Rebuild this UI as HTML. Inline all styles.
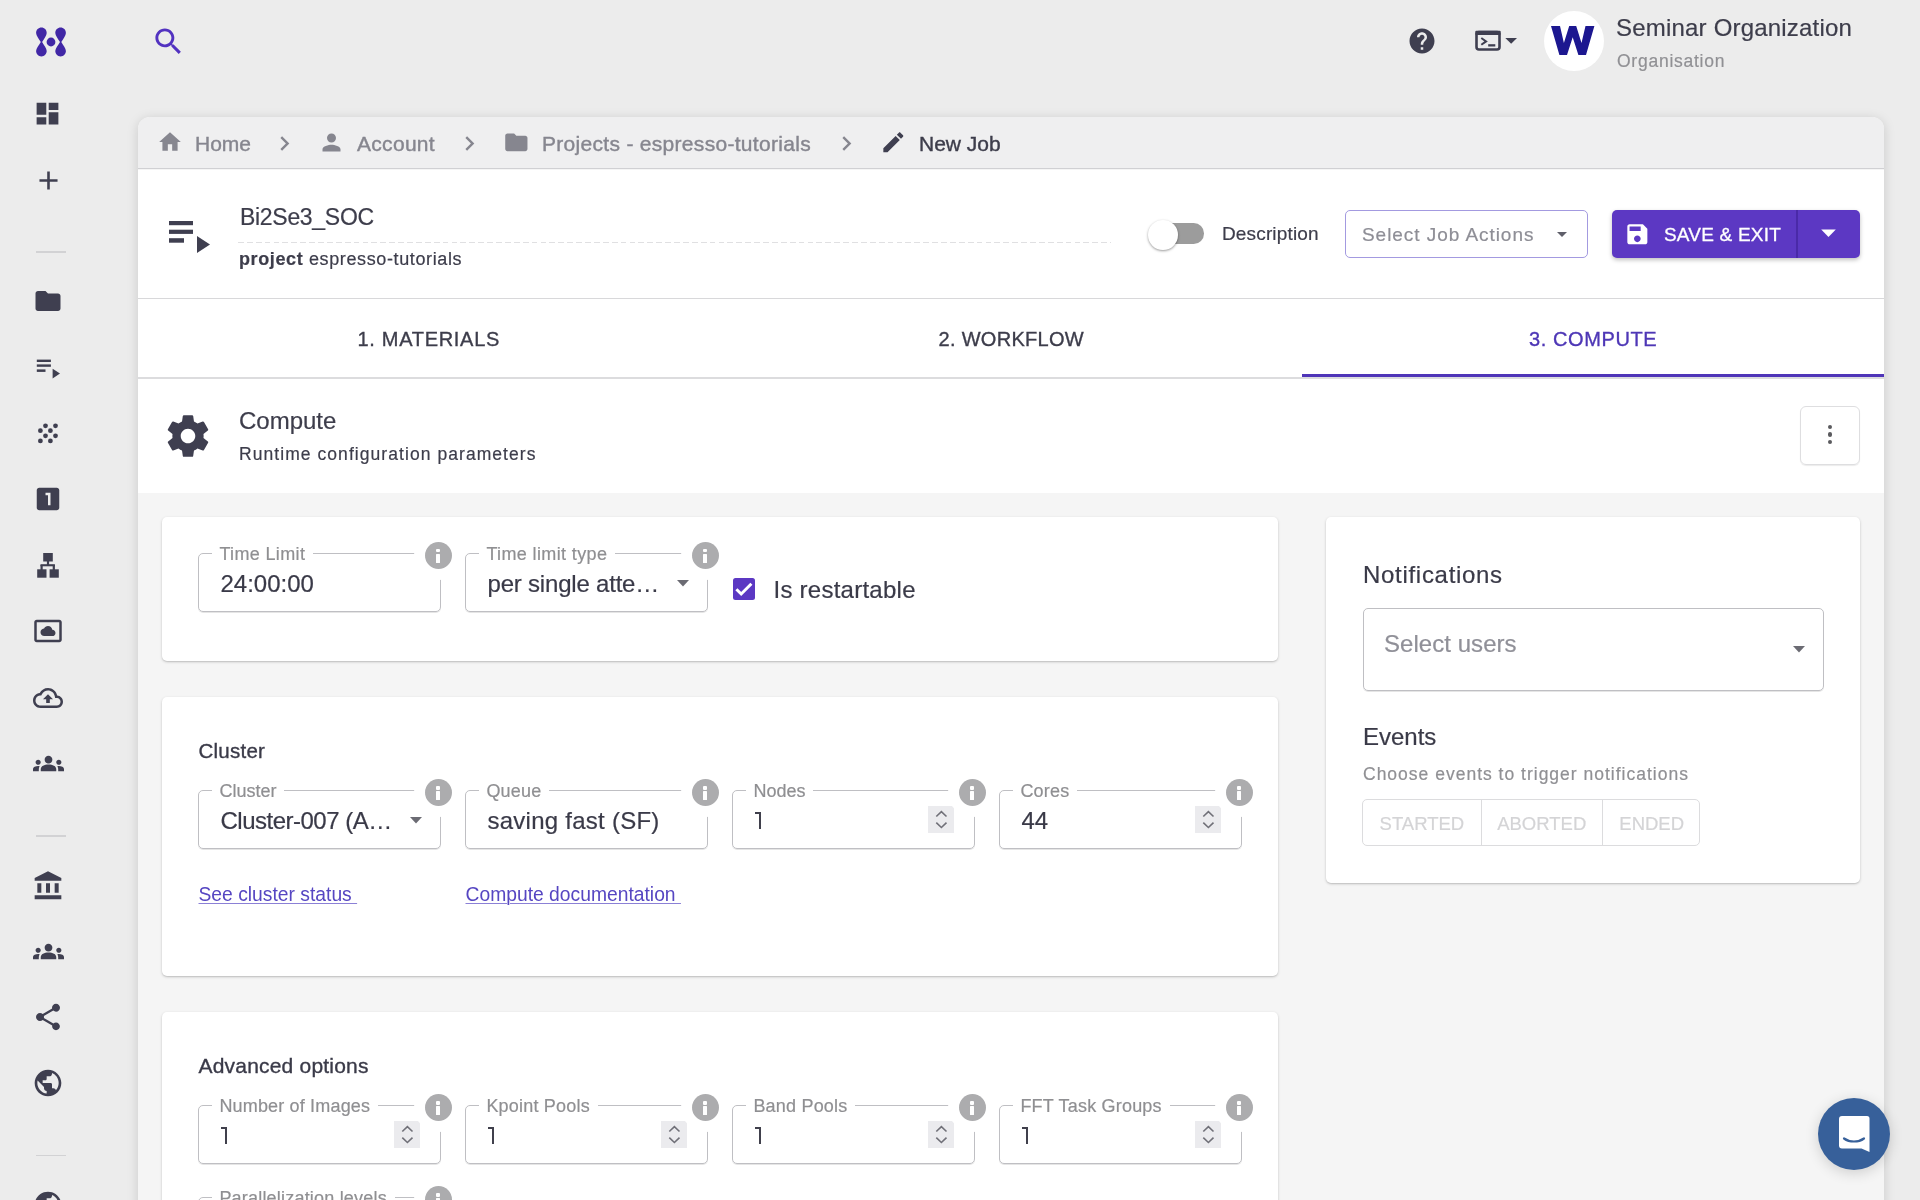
<!DOCTYPE html>
<html><head><meta charset="utf-8">
<style>
*{box-sizing:border-box;}
html,body{margin:0;padding:0;}
body{width:1920px;height:1200px;overflow:hidden;position:relative;will-change:transform;background:#ececec;font-family:"Liberation Sans",sans-serif;color:#3d3d4b;}
.a{position:absolute;}
.t{position:absolute;white-space:nowrap;line-height:1;-webkit-text-stroke-width:0.2px;}
svg.i{position:absolute;fill:#3f3f50;}
.card{position:absolute;background:#fff;border-radius:5px;box-shadow:0 1px 3px rgba(0,0,0,0.18),0 1px 1px rgba(0,0,0,0.08);}
.fld{position:absolute;border:1px solid #bdbdbd;border-radius:5px;height:58px;width:242px;}
.lbl{position:absolute;white-space:nowrap;line-height:1;color:#8e8e96;font-size:18px;letter-spacing:0.3px;background:#fff;padding:0 5px;}
.val{position:absolute;white-space:nowrap;line-height:1;color:#3a3a48;font-size:24px;}
.info{position:absolute;width:48px;height:48px;border-radius:50%;background:#fff;}
.info::after{content:"";position:absolute;left:10.5px;top:10.5px;width:27px;height:27px;border-radius:50%;background:#a9a9a9;}
.info i{position:absolute;left:22.5px;z-index:2;background:#fff;width:3px;}
.spin{position:absolute;width:27px;height:27px;background:#ebebee;}
</style></head>
<body>

<!-- ===== SIDEBAR ===== -->
<!-- logo -->
<svg class="a" style="left:34px;top:26px" width="34" height="32" viewBox="0 0 34 32">
  <g fill="#4127a6">
    <path d="M7.4 1.6c3 0 5.3 2.4 5.3 5.3 0 2.6-2.7 5.8-4.6 9.1h-1.3C4.9 12.7 2.1 9.5 2.1 6.9c0-2.9 2.4-5.3 5.3-5.3z"/>
    <path d="M26.6 1.6c3 0 5.3 2.4 5.3 5.3 0 2.6-2.7 5.8-4.6 9.1h-1.3c-1.9-3.3-4.7-6.5-4.7-9.1 0-2.9 2.4-5.3 5.3-5.3z"/>
    <path d="M7.4 30.4c3 0 5.3-2.4 5.3-5.3 0-2.6-2.7-5.8-4.6-9.1h-1.3C4.9 19.3 2.1 22.5 2.1 25.1c0 2.9 2.4 5.3 5.3 5.3z"/>
    <path d="M26.6 30.4c3 0 5.3-2.4 5.3-5.3 0-2.6-2.7-5.8-4.6-9.1h-1.3c-1.9 3.3-4.7 6.5-4.7 9.1 0 2.9 2.4 5.3 5.3 5.3z"/>
    <circle cx="17" cy="16" r="4.4"/>
  </g>
</svg>
<!-- dashboard -->
<svg class="i" style="left:33px;top:99px" width="29" height="29" viewBox="0 0 24 24"><path d="M3 13h8V3H3v10zm0 8h8v-6H3v6zm10 0h8V11h-8v10zm0-18v6h8V3h-8z"/></svg>
<!-- add -->
<svg class="i" style="left:32.6px;top:164.6px" width="31" height="31" viewBox="0 0 24 24"><path d="M19 13h-6v6h-2v-6H5v-2h6V5h2v6h6v2z"/></svg>
<div class="a" style="left:36px;top:251.2px;width:29.7px;height:1.6px;background:#d2d2d4"></div>
<!-- folder -->
<svg class="i" style="left:33px;top:286px" width="30" height="30" viewBox="0 0 24 24"><path d="M10 4H4c-1.1 0-1.99.9-1.99 2L2 18c0 1.1.9 2 2 2h16c1.1 0 2-.9 2-2V8c0-1.1-.9-2-2-2h-8l-2-2z"/></svg>
<!-- playlist play -->
<svg class="i" style="left:32px;top:352px" width="32" height="32" viewBox="0 0 32 32">
  <rect x="4.8" y="7.6" width="14.1" height="2.4"/><rect x="4.8" y="12.4" width="14.1" height="2.4"/><rect x="4.8" y="17.4" width="8.7" height="2.5"/><path d="M20.6 16.7v9.8l7.4-4.9z"/>
</svg>
<!-- scatter dots -->
<svg class="i" style="left:32px;top:417px" width="32" height="32" viewBox="0 0 32 32">
  <circle cx="13.5" cy="8.8" r="2.4"/><circle cx="23.5" cy="8.8" r="2.4"/>
  <circle cx="8.4" cy="13.7" r="2.4"/><circle cx="18.4" cy="13.7" r="2.4"/>
  <circle cx="13.5" cy="18.8" r="2.4"/><circle cx="23.5" cy="18.8" r="2.4"/>
  <circle cx="8.4" cy="23.9" r="2.4"/><circle cx="18.4" cy="23.9" r="2.4"/>
</svg>
<!-- looks one -->
<svg class="i" style="left:33px;top:484px" width="30" height="30" viewBox="0 0 24 24"><path d="M19 3H5c-1.1 0-2 .9-2 2v14c0 1.1.9 2 2 2h14c1.1 0 2-.9 2-2V5c0-1.1-.9-2-2-2zm-5 14h-2V9h-2V7h4v10z"/></svg>
<!-- sitemap -->
<svg class="i" style="left:32px;top:549px" width="32" height="32" viewBox="0 0 32 32">
  <rect x="11.2" y="4" width="9.6" height="8.5"/><rect x="14.9" y="12" width="2.2" height="4"/>
  <rect x="8.5" y="15.2" width="14.4" height="2.1"/><rect x="8.5" y="16" width="2.2" height="5"/><rect x="20.7" y="16" width="2.2" height="5"/>
  <rect x="5.2" y="20.3" width="9.3" height="8.4"/><rect x="17.6" y="20.3" width="9.2" height="8.4"/>
</svg>
<!-- daydream -->
<svg class="i" style="left:33px;top:616.3px" width="30" height="30" viewBox="0 0 24 24"><path d="M9 16h6.5c1.38 0 2.5-1.12 2.5-2.5S16.88 11 15.5 11h-.05c-.24-1.69-1.69-3-3.45-3-1.4 0-2.6.83-3.16 2.02h-.16C7.17 10.18 6 11.45 6 13c0 1.66 1.34 3 3 3zM21 3H3c-1.1 0-2 .9-2 2v14c0 1.1.9 2 2 2h18c1.1 0 2-.9 2-2V5c0-1.1-.9-2-2-2zm0 16.01H3V4.99h18v14.02z"/></svg>
<!-- cloud upload -->
<svg class="i" style="left:33px;top:683px" width="30" height="30" viewBox="0 0 24 24"><path d="M19.35 10.04C18.67 6.59 15.64 4 12 4 9.11 4 6.6 5.64 5.35 8.04 2.34 8.36 0 10.91 0 14c0 3.31 2.69 6 6 6h13c2.76 0 5-2.24 5-5 0-2.64-2.05-4.78-4.65-4.96zM19 18H6c-2.21 0-4-1.79-4-4 0-2.05 1.53-3.76 3.56-3.97l1.07-.11.5-.95C8.08 7.14 9.94 6 12 6c2.62 0 4.88 1.86 5.39 4.43l.3 1.5 1.53.11c1.56.1 2.78 1.41 2.78 2.96 0 1.65-1.35 3-3 3zM8 13h2.55v3h2.9v-3H16l-4-4z"/></svg>
<!-- groups -->
<svg class="i" style="left:32.7px;top:747.7px" width="31" height="31" viewBox="0 0 24 24"><path d="M12 12.75c1.63 0 3.07.39 4.24.9 1.08.48 1.760 1.56 1.76 2.73V18H6v-1.61c0-1.18.68-2.26 1.76-2.73 1.17-.52 2.61-.91 4.240-.91zM4 13c1.1 0 2-.9 2-2s-.9-2-2-2-2 .9-2 2 .9 2 2 2zm1.13 1.1c-.37-.06-.74-.1-1.13-.1-.99 0-1.93.21-2.78.58C.48 14.9 0 15.62 0 16.43V18h4.5v-1.61c0-.83.23-1.61.63-2.29zM20 13c1.1 0 2-.9 2-2s-.9-2-2-2-2 .9-2 2 .9 2 2 2zm4 3.43c0-.81-.48-1.53-1.22-1.85-.85-.37-1.79-.58-2.78-.58-.39 0-.76.04-1.13.1.4.68.63 1.46.63 2.29V18H24v-1.57zM12 6c1.66 0 3 1.34 3 3s-1.34 3-3 3-3-1.34-3-3 1.34-3 3-3z"/></svg>
<div class="a" style="left:36px;top:835.2px;width:29.7px;height:1.6px;background:#d2d2d4"></div>
<!-- bank -->
<svg class="i" style="left:32.3px;top:870.4px" width="32" height="32" viewBox="0 0 24 24"><path d="M4 10v7h3v-7H4zm6.5 0v7h3v-7h-3zM2 22h20v-3H2v3zm15-12v7h3v-7h-3zM12 1L2 6v2h20V6L12 1z"/></svg>
<!-- groups -->
<svg class="i" style="left:32.7px;top:935.7px" width="31" height="31" viewBox="0 0 24 24"><path d="M12 12.75c1.63 0 3.07.39 4.24.9 1.08.48 1.76 1.56 1.76 2.73V18H6v-1.61c0-1.18.68-2.26 1.76-2.73 1.17-.52 2.61-.91 4.24-.91zM4 13c1.1 0 2-.9 2-2s-.9-2-2-2-2 .9-2 2 .9 2 2 2zm1.13 1.1c-.37-.06-.74-.1-1.130-.1-.99 0-1.93.21-2.78.58C.48 14.9 0 15.62 0 16.43V18h4.5v-1.61c0-.83.23-1.61.63-2.29zM20 13c1.1 0 2-.9 2-2s-.9-2-2-2-2 .9-2 2 .9 2 2 2zm4 3.43c0-.81-.48-1.53-1.22-1.85-.85-.37-1.79-.58-2.78-.58-.39 0-.76.04-1.13.1.4.68.63 1.46.63 2.29V18H24v-1.57zM12 6c1.66 0 3 1.34 3 3s-1.34 3-3 3-3-1.34-3-3 1.34-3 3-3z"/></svg>
<!-- share -->
<svg class="i" style="left:32px;top:1001px" width="32" height="32" viewBox="0 0 24 24"><path d="M18 16.08c-.76 0-1.44.3-1.96.77L8.91 12.7c.05-.23.09-.46.09-.7s-.04-.47-.09-.7l7.05-4.11c.54.5 1.25.81 2.04.81 1.66 0 3-1.34 3-3s-1.34-3-3-3-3 1.34-3 3c0 .24.04.47.09.7L8.04 9.81C7.5 9.31 6.79 9 6 9c-1.66 0-3 1.34-3 3s1.34 3 3 3c.79 0 1.5-.31 2.04-.81l7.12 4.16c-.05.21-.08.43-.08.65 0 1.61 1.31 2.92 2.92 2.92 1.61 0 2.92-1.31 2.92-2.92s-1.31-2.92-2.92-2.92z"/></svg>
<!-- globe -->
<svg class="i" style="left:32px;top:1067px" width="32" height="32" viewBox="0 0 24 24"><path d="M12 2C6.48 2 2 6.48 2 12s4.48 10 10 10 10-4.48 10-10S17.52 2 12 2zm-1 17.930c-3.95-.49-7-3.85-7-7.93 0-.62.08-1.21.21-1.79L9 15v1c0 1.1.9 2 2 2v1.93zm6.9-2.54c-.26-.81-1-1.39-1.9-1.39h-1v-3c0-.55-.45-1-1-1H8v-2h2c.55 0 1-.45 1-1V7h2c1.1 0 2-.9 2-2v-.41c2.93 1.19 5 4.06 5 7.41 0 2.08-.8 3.97-2.1 5.39z"/></svg>
<div class="a" style="left:36px;top:1154.7px;width:29.7px;height:1.6px;background:#d2d2d4"></div>
<svg class="i" style="left:32px;top:1189px" width="32" height="32" viewBox="0 0 24 24"><path d="M12 2C6.48 2 2 6.48 2 12s4.48 10 10 10 10-4.48 10-10S17.52 2 12 2zm-1 17.93c-3.95-.49-7-3.85-7-7.93 0-.62.08-1.21.21-1.79L9 15v1c0 1.1.9 2 2 2v1.93zm6.9-2.54c-.26-.81-1-1.39-1.9-1.39h-1v-3c0-.55-.45-1-1-1H8v-2h2c.55 0 1-.45 1-1V7h2c1.1 0 2-.9 2-2v-.41c2.93 1.19 5 4.06 5 7.41 0 2.08-.8 3.97-2.1 5.39z"/></svg>

<!-- ===== TOP BAR ===== -->
<svg class="a" style="left:150.5px;top:24.3px;fill:#5232c0" width="35" height="35" viewBox="0 0 24 24"><path d="M15.5 14h-.79l-.28-.27C15.41 12.59 16 11.11 16 9.5 16 5.91 13.09 3 9.5 3S3 5.91 3 9.5 5.91 16 9.5 16c1.61 0 3.09-.59 4.23-1.57l.27.28v.79l5 4.99L20.49 19l-4.99-5zm-6 0C7.01 14 5 11.99 5 9.5S7.01 5 9.5 5 14 7.01 14 9.5 11.99 14 9.5 14z"/></svg>
<!-- help -->
<svg class="i" style="left:1406.5px;top:25.5px" width="30" height="30" viewBox="0 0 24 24"><path d="M12 2C6.48 2 2 6.48 2 12s4.48 10 10 10 10-4.48 10-10S17.52 2 12 2zm1 17h-2v-2h2v2zm2.07-7.75l-.9.92C13.45 12.9 13 13.5 13 15h-2v-.5c0-1.1.45-2.1 1.17-2.83l1.24-1.26c.37-.36.59-.86.59-1.41 0-1.1-.9-2-2-2s-2 .9-2 2H8c0-2.21 1.79-4 4-4s4 1.79 4 4c0 .88-.36 1.68-.93 2.25z"/></svg>
<!-- terminal -->
<svg class="a" style="left:1470px;top:20px" width="60" height="40" viewBox="0 0 60 40">
  <rect x="6.5" y="12" width="23" height="17.5" rx="2.5" fill="none" stroke="#3f3f50" stroke-width="2.6"/>
  <rect x="5.3" y="10.8" width="25.4" height="4.2" rx="1" fill="#3f3f50"/>
  <path d="M11.3 18l4.8 3.4-4.8 3.4" fill="none" stroke="#3f3f50" stroke-width="2"/>
  <rect x="18.2" y="24.2" width="7.1" height="2.3" fill="#3f3f50"/>
  <path d="M35.3 18h11.7l-5.85 5.8z" fill="#3f3f50"/>
</svg>
<!-- avatar -->
<div class="a" style="left:1544px;top:11px;width:60px;height:60px;border-radius:50%;background:#fff"></div>
<svg class="a" style="left:1551.4px;top:26px" width="45" height="30" viewBox="0 0 45 30"><path d="M0 0H9L12.9 17L18.2 0H25.2L30.5 17L34.5 0H43.4L35 28.9H27.4L21.7 11.2L16 28.9H8.4Z" fill="#1c1790"/></svg>
<div class="t" style="left:1616px;top:15.7px;font-size:24px;color:#3d3d4b;letter-spacing:0.2px">Seminar Organization</div>
<div class="t" style="left:1617px;top:53px;font-size:17.5px;color:#909094;letter-spacing:0.75px">Organisation</div>

<!-- ===== MAIN CONTAINER ===== -->
<div class="a" style="left:138px;top:117px;width:1746px;height:1100px;background:#f5f5f5;border-radius:12px 12px 0 0;box-shadow:0 2px 12px rgba(0,0,0,0.15)"></div>
<!-- breadcrumb -->
<div class="a" style="left:138px;top:117px;width:1746px;height:52.3px;background:#efeff0;border-radius:12px 12px 0 0;border-bottom:1.6px solid #d0d0d3"></div>


<!-- breadcrumb items -->
<svg class="a" style="left:157px;top:129.3px;fill:#86868f" width="26" height="26" viewBox="0 0 24 24"><path d="M10 20v-6h4v6h5v-8h3L12 3 2 12h3v8z"/></svg>
<div class="t" style="left:195px;top:133.3px;font-size:21px;color:#86868f;-webkit-text-stroke-width:0.4px">Home</div>
<svg class="a" style="left:270px;top:129.3px;fill:#86868f" width="29" height="29" viewBox="0 0 24 24"><path d="M10 6L8.59 7.41 13.17 12l-4.58 4.59L10 18l6-6z"/></svg>
<svg class="a" style="left:318px;top:129.3px;fill:#86868f" width="27" height="27" viewBox="0 0 24 24"><path d="M12 12c2.21 0 4-1.79 4-4s-1.79-4-4-4-4 1.79-4 4 1.79 4 4 4zm0 2c-2.67 0-8 1.34-8 4v2h16v-2c0-2.66-5.33-4-8-4z"/></svg>
<div class="t" style="left:357px;top:133.3px;font-size:21px;color:#86868f;letter-spacing:0.3px;-webkit-text-stroke-width:0.4px">Account</div>
<svg class="a" style="left:455px;top:129.3px;fill:#86868f" width="29" height="29" viewBox="0 0 24 24"><path d="M10 6L8.59 7.41 13.17 12l-4.58 4.59L10 18l6-6z"/></svg>
<svg class="a" style="left:503px;top:128.8px;fill:#86868f" width="26.7" height="26.7" viewBox="0 0 24 24"><path d="M10 4H4c-1.1 0-1.99.9-1.99 2L2 18c0 1.1.9 2 2 2h16c1.1 0 2-.9 2-2V8c0-1.1-.9-2-2-2h-8l-2-2z"/></svg>
<div class="t" style="left:542px;top:133.3px;font-size:21px;color:#86868f;letter-spacing:0.3px;-webkit-text-stroke-width:0.4px">Projects - espresso-tutorials</div>
<svg class="a" style="left:832px;top:129.3px;fill:#86868f" width="29" height="29" viewBox="0 0 24 24"><path d="M10 6L8.59 7.41 13.17 12l-4.58 4.59L10 18l6-6z"/></svg>
<svg class="i" style="left:879.7px;top:129.0px" width="26.7" height="26.7" viewBox="0 0 24 24"><path d="M3 17.25V21h3.75L17.81 9.94l-3.75-3.75L3 17.25zM20.71 7.04c.39-.39.39-1.02 0-1.41l-2.34-2.34c-.39-.39-1.020-.39-1.41 0l-1.83 1.83 3.75 3.75 1.83-1.83z"/></svg>
<div class="t" style="left:919px;top:133.3px;font-size:21px;color:#3d3d4b;-webkit-text-stroke-width:0.4px">New Job</div>

<!-- header section -->
<div class="a" style="left:138px;top:170px;width:1746px;height:128px;background:#fff"></div>
<svg class="i" style="left:168px;top:220px" width="44" height="34" viewBox="0 0 44 34">
  <rect x="1" y="1" width="24" height="4.2"/><rect x="1" y="9.7" width="24" height="4.2"/><rect x="1" y="18.2" width="15" height="4.5"/><path d="M29 16v17l13-8.5z"/>
</svg>
<div class="t" style="left:240px;top:205.5px;font-size:23px;color:#3d3d4b;letter-spacing:-0.3px">Bi2Se3_SOC</div>
<div class="a" style="left:238px;top:241.6px;width:873px;height:1.3px;background:repeating-linear-gradient(to right,#e0e0e2 0 5.8px,transparent 5.8px 8.9px)"></div>
<div class="t" style="left:239px;top:250px;font-size:18px;color:#3d3d4b;letter-spacing:0.62px"><b>project</b> espresso-tutorials</div>
<!-- toggle -->
<div class="a" style="left:1160px;top:223.3px;width:43.8px;height:20.5px;border-radius:10.25px;background:#9c9c9c"></div>
<div class="a" style="left:1147.5px;top:219.6px;width:30.2px;height:30px;border-radius:50%;background:#fff;box-shadow:0 1px 2.5px rgba(0,0,0,0.4)"></div>
<div class="t" style="left:1222px;top:224px;font-size:19px;color:#3d3d4b;letter-spacing:0.15px">Description</div>
<!-- select job actions -->
<div class="a" style="left:1345px;top:210px;width:243px;height:48px;border:1.5px solid #a39ae0;border-radius:5px"></div>
<div class="t" style="left:1362px;top:225px;font-size:19px;color:#8e8e96;letter-spacing:0.95px">Select Job Actions</div>
<svg class="a" style="left:1550px;top:222px;fill:#5f5f6a" width="24" height="24" viewBox="0 0 24 24"><path d="M7 10l5 5 5-5z"/></svg>
<!-- save & exit -->
<div class="a" style="left:1612px;top:210px;width:248px;height:48px;border-radius:5px;background:#5c38c3;box-shadow:0 2px 4px rgba(0,0,0,0.25)"></div>
<div class="a" style="left:1796px;top:210px;width:1.5px;height:48px;background:#4a2aa8"></div>
<svg class="a" style="left:1624.4px;top:220.9px;fill:#fff" width="26.7" height="26.7" viewBox="0 0 24 24"><path d="M17 3H5c-1.11 0-2 .9-2 2v14c0 1.1.89 2 2 2h14c1.1 0 2-.9 2-2V7l-4-4zm-5 16c-1.66 0-3-1.34-3-3s1.34-3 3-3 3 1.34 3 3-1.34 3-3 3zm3-10H5V5h10v4z"/></svg>
<div class="t" style="left:1664px;top:225px;font-size:19px;color:#fff;letter-spacing:0.2px;-webkit-text-stroke:0.3px #fff">SAVE &amp; EXIT</div>
<svg class="a" style="left:1811px;top:215px;fill:#fff" width="35" height="35" viewBox="0 0 24 24"><path d="M7 10l5 5 5-5z"/></svg>

<!-- tabs -->
<div class="a" style="left:138px;top:298px;width:1746px;height:1.3px;background:#d8d8da"></div>
<div class="a" style="left:138px;top:299px;width:1746px;height:78px;background:#fff"></div>
<div class="a" style="left:138px;top:377px;width:1746px;height:1.7px;background:#dcdcde"></div>
<div class="t" style="left:357.5px;top:329px;font-size:20px;color:#3d3d4b;letter-spacing:0.7px;-webkit-text-stroke:0.35px #3d3d4b">1. MATERIALS</div>
<div class="t" style="left:938.5px;top:329px;font-size:20px;color:#3d3d4b;letter-spacing:0.3px;-webkit-text-stroke:0.35px #3d3d4b">2. WORKFLOW</div>
<div class="t" style="left:1529px;top:329px;font-size:20px;color:#4e37b6;letter-spacing:0.6px;-webkit-text-stroke:0.35px #4e37b6">3. COMPUTE</div>
<div class="a" style="left:1302px;top:374px;width:582px;height:3px;background:#4f35b8"></div>

<!-- compute header -->
<div class="a" style="left:138px;top:379px;width:1746px;height:114px;background:#fff"></div>
<svg class="i" style="left:163px;top:411px" width="50" height="50" viewBox="0 0 24 24"><path d="M19.43 12.98c.04-.32.07-.64.07-.98s-.03-.66-.07-.98l2.11-1.65c.19-.15.24-.42.12-.64l-2-3.46c-.12-.22-.39-.3-.61-.22l-2.49 1c-.52-.4-1.08-.73-1.69-.98l-.38-2.65C14.46 2.18 14.25 2 14 2h-4c-.25 0-.46.18-.49.42l-.38 2.65c-.61.25-1.17.59-1.69.98l-2.49-1c-.23-.09-.49 0-.61.22l-2 3.46c-.13.22-.07.49.12.64l2.11 1.65c-.04.32-.07.65-.07.98s.03.66.07.98l-2.11 1.65c-.19.15-.24.42-.12.64l2 3.46c.12.22.39.3.61.22l2.49-1c.52.4 1.08.73 1.69.98l.38 2.65c.03.24.24.42.49.42h4c.25 0 .46-.18.49-.42l.38-2.65c.61-.25 1.17-.59 1.69-.98l2.49 1c.23.09.49 0 .61-.22l2-3.46c.12-.22.07-.49-.12-.64l-2.11-1.65zM12 15.5c-1.93 0-3.5-1.57-3.5-3.5s1.57-3.5 3.5-3.5 3.5 1.57 3.5 3.5-1.57 3.5-3.5 3.5z"/></svg>
<div class="t" style="left:239px;top:409px;font-size:24px;color:#3d3d4b">Compute</div>
<div class="t" style="left:239px;top:446px;font-size:17.5px;color:#3d3d4b;letter-spacing:1.06px">Runtime configuration parameters</div>
<div class="a" style="left:1800px;top:406px;width:60px;height:59px;border:1.5px solid #dedee0;border-radius:6px;box-shadow:0 1px 1px rgba(0,0,0,0.08)"></div>
<div class="a" style="left:1827.7px;top:424.5px;width:4.5px;height:4.5px;border-radius:50%;background:#5a5a5e"></div>
<div class="a" style="left:1827.7px;top:432px;width:4.5px;height:4.5px;border-radius:50%;background:#5a5a5e"></div>
<div class="a" style="left:1827.7px;top:439.5px;width:4.5px;height:4.5px;border-radius:50%;background:#5a5a5e"></div>

<div class="card" style="left:162px;top:517px;width:1116px;height:144px"></div>
<div class="a" style="left:198.4px;top:552.6999999999999px;width:242.3px;height:59.6px;border:1.2px solid #bfbfc3;border-radius:5px;box-shadow:0 1px 0.5px rgba(0,0,0,0.10)"></div>
<div class="t" style="left:212.4px;top:545.3px;height:16px;padding:0 8px 0 7px;background:#fff;font-size:18px;color:transparent;letter-spacing:0.35px">Time Limit</div>
<div class="t" style="left:219.4px;top:544.56px;font-size:18px;color:#8f8f92;letter-spacing:0.35px">Time Limit</div>
<div class="t" style="left:220.5px;top:571.68px;font-size:24px;color:#3a3a48;letter-spacing:0px">24:00:00</div>
<div class="a" style="left:414.0px;top:530.8px;width:49px;height:49px;border-radius:50%;background:#fff"></div>
<div class="a" style="left:425.0px;top:541.8px;width:27px;height:27px;border-radius:50%;background:#acacae"></div>
<div class="a" style="left:436.4px;top:548.9px;width:3.6px;height:3.5px;border-radius:1px;background:#fff"></div>
<div class="a" style="left:436.4px;top:553.9px;width:3.6px;height:8.9px;border-radius:0.5px;background:#fff"></div>
<div class="a" style="left:465.4px;top:552.6999999999999px;width:242.3px;height:59.6px;border:1.2px solid #bfbfc3;border-radius:5px;box-shadow:0 1px 0.5px rgba(0,0,0,0.10)"></div>
<div class="t" style="left:479.4px;top:545.3px;height:16px;padding:0 8px 0 7px;background:#fff;font-size:18px;color:transparent;letter-spacing:0.37px">Time limit type</div>
<div class="t" style="left:486.4px;top:544.56px;font-size:18px;color:#8f8f92;letter-spacing:0.37px">Time limit type</div>
<div class="t" style="left:487.5px;top:571.68px;font-size:24px;color:#3a3a48;letter-spacing:-0.2px">per single atte…</div>
<svg class="a" style="left:677px;top:580.3px" width="12" height="6.5" viewBox="0 0 12 6.5"><path d="M0 0h12L6 6.5z" fill="#6b6b73"/></svg>
<div class="a" style="left:681.0px;top:530.8px;width:49px;height:49px;border-radius:50%;background:#fff"></div>
<div class="a" style="left:692.0px;top:541.8px;width:27px;height:27px;border-radius:50%;background:#acacae"></div>
<div class="a" style="left:703.4px;top:548.9px;width:3.6px;height:3.5px;border-radius:1px;background:#fff"></div>
<div class="a" style="left:703.4px;top:553.9px;width:3.6px;height:8.9px;border-radius:0.5px;background:#fff"></div>
<div class="a" style="left:733px;top:577.5px;width:22px;height:22px;border-radius:2.5px;background:#5c38c3"></div>
<svg class="a" style="left:733px;top:577.5px" width="22" height="22" viewBox="0 0 22 22"><path d="M3.4 11.2l4.8 4.8 10.2-10.2" fill="none" stroke="#fff" stroke-width="3"/></svg>
<div class="t" style="left:773.5px;top:578.08px;font-size:24px;color:#3a3a48;letter-spacing:0.25px">Is restartable</div>
<div class="card" style="left:162px;top:697px;width:1116px;height:279px"></div>
<div class="t" style="left:198.5px;top:740.55px;font-size:20.5px;color:#3a3a48;letter-spacing:0.25px;-webkit-text-stroke:0.35px #3a3a48">Cluster</div>
<div class="a" style="left:198.4px;top:789.8px;width:242.3px;height:59.6px;border:1.2px solid #bfbfc3;border-radius:5px;box-shadow:0 1px 0.5px rgba(0,0,0,0.10)"></div>
<div class="t" style="left:212.4px;top:782.4px;height:16px;padding:0 8px 0 7px;background:#fff;font-size:18px;color:transparent;letter-spacing:0px">Cluster</div>
<div class="t" style="left:219.4px;top:781.66px;font-size:18px;color:#8f8f92;letter-spacing:0px">Cluster</div>
<div class="t" style="left:220.5px;top:808.78px;font-size:24px;color:#3a3a48;letter-spacing:-0.5px">Cluster-007 (A…</div>
<svg class="a" style="left:410px;top:817.4px" width="12" height="6.5" viewBox="0 0 12 6.5"><path d="M0 0h12L6 6.5z" fill="#6b6b73"/></svg>
<div class="a" style="left:414.0px;top:767.9px;width:49px;height:49px;border-radius:50%;background:#fff"></div>
<div class="a" style="left:425.0px;top:778.9px;width:27px;height:27px;border-radius:50%;background:#acacae"></div>
<div class="a" style="left:436.4px;top:786.0px;width:3.6px;height:3.5px;border-radius:1px;background:#fff"></div>
<div class="a" style="left:436.4px;top:791.0px;width:3.6px;height:8.9px;border-radius:0.5px;background:#fff"></div>
<div class="a" style="left:465.4px;top:789.8px;width:242.3px;height:59.6px;border:1.2px solid #bfbfc3;border-radius:5px;box-shadow:0 1px 0.5px rgba(0,0,0,0.10)"></div>
<div class="t" style="left:479.4px;top:782.4px;height:16px;padding:0 8px 0 7px;background:#fff;font-size:18px;color:transparent;letter-spacing:0.2px">Queue</div>
<div class="t" style="left:486.4px;top:781.66px;font-size:18px;color:#8f8f92;letter-spacing:0.2px">Queue</div>
<div class="t" style="left:487.5px;top:808.78px;font-size:24px;color:#3a3a48;letter-spacing:0.25px">saving fast (SF)</div>
<div class="a" style="left:681.0px;top:767.9px;width:49px;height:49px;border-radius:50%;background:#fff"></div>
<div class="a" style="left:692.0px;top:778.9px;width:27px;height:27px;border-radius:50%;background:#acacae"></div>
<div class="a" style="left:703.4px;top:786.0px;width:3.6px;height:3.5px;border-radius:1px;background:#fff"></div>
<div class="a" style="left:703.4px;top:791.0px;width:3.6px;height:8.9px;border-radius:0.5px;background:#fff"></div>
<div class="a" style="left:732.4px;top:789.8px;width:242.3px;height:59.6px;border:1.2px solid #bfbfc3;border-radius:5px;box-shadow:0 1px 0.5px rgba(0,0,0,0.10)"></div>
<div class="t" style="left:746.4px;top:782.4px;height:16px;padding:0 8px 0 7px;background:#fff;font-size:18px;color:transparent;letter-spacing:0px">Nodes</div>
<div class="t" style="left:753.4px;top:781.66px;font-size:18px;color:#8f8f92;letter-spacing:0px">Nodes</div>
<div class="a" style="left:755px;top:812.0px;width:5.9px;height:1.9px;background:#40404c"></div>
<div class="a" style="left:758.8px;top:812.0px;width:2.15px;height:16.75px;background:#40404c"></div>
<div class="a" style="left:927.6px;top:806.1px;width:26.7px;height:26.5px;background:#ebebee"></div>
<svg class="a" style="left:927.6px;top:806.1px" width="27" height="27" viewBox="0 0 27 27"><path d="M8.3 10.5L13.4 5.6 18.5 10.5M8.3 16.6L13.4 21.5 18.5 16.6" fill="none" stroke="#707078" stroke-width="1.6"/></svg>
<div class="a" style="left:948.0px;top:767.9px;width:49px;height:49px;border-radius:50%;background:#fff"></div>
<div class="a" style="left:959.0px;top:778.9px;width:27px;height:27px;border-radius:50%;background:#acacae"></div>
<div class="a" style="left:970.4px;top:786.0px;width:3.6px;height:3.5px;border-radius:1px;background:#fff"></div>
<div class="a" style="left:970.4px;top:791.0px;width:3.6px;height:8.9px;border-radius:0.5px;background:#fff"></div>
<div class="a" style="left:999.4px;top:789.8px;width:242.3px;height:59.6px;border:1.2px solid #bfbfc3;border-radius:5px;box-shadow:0 1px 0.5px rgba(0,0,0,0.10)"></div>
<div class="t" style="left:1013.4px;top:782.4px;height:16px;padding:0 8px 0 7px;background:#fff;font-size:18px;color:transparent;letter-spacing:0.2px">Cores</div>
<div class="t" style="left:1020.4px;top:781.66px;font-size:18px;color:#8f8f92;letter-spacing:0.2px">Cores</div>
<div class="t" style="left:1021.5px;top:808.78px;font-size:24px;color:#3a3a48;letter-spacing:0px">44</div>
<div class="a" style="left:1194.6px;top:806.1px;width:26.7px;height:26.5px;background:#ebebee"></div>
<svg class="a" style="left:1194.6px;top:806.1px" width="27" height="27" viewBox="0 0 27 27"><path d="M8.3 10.5L13.4 5.6 18.5 10.5M8.3 16.6L13.4 21.5 18.5 16.6" fill="none" stroke="#707078" stroke-width="1.6"/></svg>
<div class="a" style="left:1215.0px;top:767.9px;width:49px;height:49px;border-radius:50%;background:#fff"></div>
<div class="a" style="left:1226.0px;top:778.9px;width:27px;height:27px;border-radius:50%;background:#acacae"></div>
<div class="a" style="left:1237.4px;top:786.0px;width:3.6px;height:3.5px;border-radius:1px;background:#fff"></div>
<div class="a" style="left:1237.4px;top:791.0px;width:3.6px;height:8.9px;border-radius:0.5px;background:#fff"></div>
<div class="t" style="left:198.5px;top:885.16px;font-size:19.3px;color:#5646c2;-webkit-text-stroke-width:0;text-decoration:underline;text-decoration-color:#8b80d6;text-decoration-thickness:1px;text-underline-offset:2px">See cluster status&nbsp;</div>
<div class="t" style="left:465.5px;top:885.16px;font-size:19.3px;color:#5646c2;-webkit-text-stroke-width:0;text-decoration:underline;text-decoration-color:#8b80d6;text-decoration-thickness:1px;text-underline-offset:2px">Compute documentation&nbsp;</div>
<div class="card" style="left:162px;top:1012px;width:1116px;height:248px"></div>
<div class="t" style="left:198.5px;top:1054.72px;font-size:21px;color:#3a3a48;letter-spacing:0.2px;-webkit-text-stroke:0.35px #3a3a48">Advanced options</div>
<div class="a" style="left:198.4px;top:1104.9px;width:242.3px;height:59.6px;border:1.2px solid #bfbfc3;border-radius:5px;box-shadow:0 1px 0.5px rgba(0,0,0,0.10)"></div>
<div class="t" style="left:212.4px;top:1097.5px;height:16px;padding:0 8px 0 7px;background:#fff;font-size:18px;color:transparent;letter-spacing:0.17px">Number of Images</div>
<div class="t" style="left:219.4px;top:1096.76px;font-size:18px;color:#8f8f92;letter-spacing:0.17px">Number of Images</div>
<div class="a" style="left:221px;top:1127.1px;width:5.9px;height:1.9px;background:#40404c"></div>
<div class="a" style="left:224.8px;top:1127.1px;width:2.15px;height:16.75px;background:#40404c"></div>
<div class="a" style="left:393.6px;top:1121.2px;width:26.7px;height:26.5px;background:#ebebee"></div>
<svg class="a" style="left:393.6px;top:1121.2px" width="27" height="27" viewBox="0 0 27 27"><path d="M8.3 10.5L13.4 5.6 18.5 10.5M8.3 16.6L13.4 21.5 18.5 16.6" fill="none" stroke="#707078" stroke-width="1.6"/></svg>
<div class="a" style="left:414.0px;top:1083.0px;width:49px;height:49px;border-radius:50%;background:#fff"></div>
<div class="a" style="left:425.0px;top:1094.0px;width:27px;height:27px;border-radius:50%;background:#acacae"></div>
<div class="a" style="left:436.4px;top:1101.1px;width:3.6px;height:3.5px;border-radius:1px;background:#fff"></div>
<div class="a" style="left:436.4px;top:1106.1px;width:3.6px;height:8.9px;border-radius:0.5px;background:#fff"></div>
<div class="a" style="left:465.4px;top:1104.9px;width:242.3px;height:59.6px;border:1.2px solid #bfbfc3;border-radius:5px;box-shadow:0 1px 0.5px rgba(0,0,0,0.10)"></div>
<div class="t" style="left:479.4px;top:1097.5px;height:16px;padding:0 8px 0 7px;background:#fff;font-size:18px;color:transparent;letter-spacing:0.2px">Kpoint Pools</div>
<div class="t" style="left:486.4px;top:1096.76px;font-size:18px;color:#8f8f92;letter-spacing:0.2px">Kpoint Pools</div>
<div class="a" style="left:488px;top:1127.1px;width:5.9px;height:1.9px;background:#40404c"></div>
<div class="a" style="left:491.8px;top:1127.1px;width:2.15px;height:16.75px;background:#40404c"></div>
<div class="a" style="left:660.6px;top:1121.2px;width:26.7px;height:26.5px;background:#ebebee"></div>
<svg class="a" style="left:660.6px;top:1121.2px" width="27" height="27" viewBox="0 0 27 27"><path d="M8.3 10.5L13.4 5.6 18.5 10.5M8.3 16.6L13.4 21.5 18.5 16.6" fill="none" stroke="#707078" stroke-width="1.6"/></svg>
<div class="a" style="left:681.0px;top:1083.0px;width:49px;height:49px;border-radius:50%;background:#fff"></div>
<div class="a" style="left:692.0px;top:1094.0px;width:27px;height:27px;border-radius:50%;background:#acacae"></div>
<div class="a" style="left:703.4px;top:1101.1px;width:3.6px;height:3.5px;border-radius:1px;background:#fff"></div>
<div class="a" style="left:703.4px;top:1106.1px;width:3.6px;height:8.9px;border-radius:0.5px;background:#fff"></div>
<div class="a" style="left:732.4px;top:1104.9px;width:242.3px;height:59.6px;border:1.2px solid #bfbfc3;border-radius:5px;box-shadow:0 1px 0.5px rgba(0,0,0,0.10)"></div>
<div class="t" style="left:746.4px;top:1097.5px;height:16px;padding:0 8px 0 7px;background:#fff;font-size:18px;color:transparent;letter-spacing:0.2px">Band Pools</div>
<div class="t" style="left:753.4px;top:1096.76px;font-size:18px;color:#8f8f92;letter-spacing:0.2px">Band Pools</div>
<div class="a" style="left:755px;top:1127.1px;width:5.9px;height:1.9px;background:#40404c"></div>
<div class="a" style="left:758.8px;top:1127.1px;width:2.15px;height:16.75px;background:#40404c"></div>
<div class="a" style="left:927.6px;top:1121.2px;width:26.7px;height:26.5px;background:#ebebee"></div>
<svg class="a" style="left:927.6px;top:1121.2px" width="27" height="27" viewBox="0 0 27 27"><path d="M8.3 10.5L13.4 5.6 18.5 10.5M8.3 16.6L13.4 21.5 18.5 16.6" fill="none" stroke="#707078" stroke-width="1.6"/></svg>
<div class="a" style="left:948.0px;top:1083.0px;width:49px;height:49px;border-radius:50%;background:#fff"></div>
<div class="a" style="left:959.0px;top:1094.0px;width:27px;height:27px;border-radius:50%;background:#acacae"></div>
<div class="a" style="left:970.4px;top:1101.1px;width:3.6px;height:3.5px;border-radius:1px;background:#fff"></div>
<div class="a" style="left:970.4px;top:1106.1px;width:3.6px;height:8.9px;border-radius:0.5px;background:#fff"></div>
<div class="a" style="left:999.4px;top:1104.9px;width:242.3px;height:59.6px;border:1.2px solid #bfbfc3;border-radius:5px;box-shadow:0 1px 0.5px rgba(0,0,0,0.10)"></div>
<div class="t" style="left:1013.4px;top:1097.5px;height:16px;padding:0 8px 0 7px;background:#fff;font-size:18px;color:transparent;letter-spacing:0.2px">FFT Task Groups</div>
<div class="t" style="left:1020.4px;top:1096.76px;font-size:18px;color:#8f8f92;letter-spacing:0.2px">FFT Task Groups</div>
<div class="a" style="left:1022px;top:1127.1px;width:5.9px;height:1.9px;background:#40404c"></div>
<div class="a" style="left:1025.8px;top:1127.1px;width:2.15px;height:16.75px;background:#40404c"></div>
<div class="a" style="left:1194.6px;top:1121.2px;width:26.7px;height:26.5px;background:#ebebee"></div>
<svg class="a" style="left:1194.6px;top:1121.2px" width="27" height="27" viewBox="0 0 27 27"><path d="M8.3 10.5L13.4 5.6 18.5 10.5M8.3 16.6L13.4 21.5 18.5 16.6" fill="none" stroke="#707078" stroke-width="1.6"/></svg>
<div class="a" style="left:1215.0px;top:1083.0px;width:49px;height:49px;border-radius:50%;background:#fff"></div>
<div class="a" style="left:1226.0px;top:1094.0px;width:27px;height:27px;border-radius:50%;background:#acacae"></div>
<div class="a" style="left:1237.4px;top:1101.1px;width:3.6px;height:3.5px;border-radius:1px;background:#fff"></div>
<div class="a" style="left:1237.4px;top:1106.1px;width:3.6px;height:8.9px;border-radius:0.5px;background:#fff"></div>
<div class="a" style="left:198.4px;top:1197.1000000000001px;width:242.3px;height:59.6px;border:1.2px solid #bfbfc3;border-radius:5px;box-shadow:0 1px 0.5px rgba(0,0,0,0.10)"></div>
<div class="t" style="left:212.4px;top:1189.7px;height:16px;padding:0 8px 0 7px;background:#fff;font-size:18px;color:transparent;letter-spacing:0.2px">Parallelization levels</div>
<div class="t" style="left:219.4px;top:1188.96px;font-size:18px;color:#8f8f92;letter-spacing:0.2px">Parallelization levels</div>
<div class="a" style="left:414.0px;top:1175.2px;width:49px;height:49px;border-radius:50%;background:#fff"></div>
<div class="a" style="left:425.0px;top:1186.2px;width:27px;height:27px;border-radius:50%;background:#acacae"></div>
<div class="a" style="left:436.4px;top:1193.3px;width:3.6px;height:3.5px;border-radius:1px;background:#fff"></div>
<div class="a" style="left:436.4px;top:1198.3px;width:3.6px;height:8.9px;border-radius:0.5px;background:#fff"></div>
<div class="card" style="left:1326px;top:517px;width:534px;height:366px"></div>
<div class="t" style="left:1363px;top:562.68px;font-size:24px;color:#3a3a48;letter-spacing:0.7px">Notifications</div>
<div class="a" style="left:1362.5px;top:607.5px;width:461px;height:83px;border:1.2px solid #bfbfc3;border-radius:5px;box-shadow:0 1px 0.5px rgba(0,0,0,0.10)"></div>
<div class="t" style="left:1384px;top:632.18px;font-size:24px;color:#909098;letter-spacing:0.05px">Select users</div>
<svg class="a" style="left:1792.5px;top:646px" width="12" height="6.5" viewBox="0 0 12 6.5"><path d="M0 0h12L6 6.5z" fill="#6b6b73"/></svg>
<div class="t" style="left:1363px;top:724.68px;font-size:24px;color:#3a3a48;letter-spacing:0">Events</div>
<div class="t" style="left:1363px;top:765.79px;font-size:17.5px;color:#909094;letter-spacing:1.0px">Choose events to trigger notifications</div>
<div class="a" style="left:1362.3px;top:799px;width:337.5px;height:47px;border:1.2px solid #dcdcde;border-radius:5px"></div>
<div class="a" style="left:1480.6px;top:799px;width:1.2px;height:47px;background:#dcdcde"></div>
<div class="a" style="left:1601.9px;top:799px;width:1.2px;height:47px;background:#dcdcde"></div>
<div class="t" style="left:1379.6px;top:814.64px;font-size:18.5px;color:#d4d4d6;letter-spacing:0">STARTED</div>
<div class="t" style="left:1497.2px;top:814.64px;font-size:18.5px;color:#d4d4d6;letter-spacing:0">ABORTED</div>
<div class="t" style="left:1619.3px;top:814.64px;font-size:18.5px;color:#d4d4d6;letter-spacing:0">ENDED</div>
<div class="a" style="left:1818px;top:1098px;width:72px;height:72px;border-radius:50%;background:#37609a;box-shadow:0 3px 14px rgba(0,0,0,0.16)"></div>
<svg class="a" style="left:1836px;top:1114px" width="36" height="40" viewBox="0 0 36 40"><path d="M6 2h25a2.5 2.5 0 0 1 2.5 2.5v33.5l-8-3.5H6a3 3 0 0 1-3-3V5a3 3 0 0 1 3-3z" fill="#fff"/><path d="M8 24.5c5.5 4 14.5 4 20 0" fill="none" stroke="#37609a" stroke-width="2.2" stroke-linecap="round"/></svg>
</body></html>
